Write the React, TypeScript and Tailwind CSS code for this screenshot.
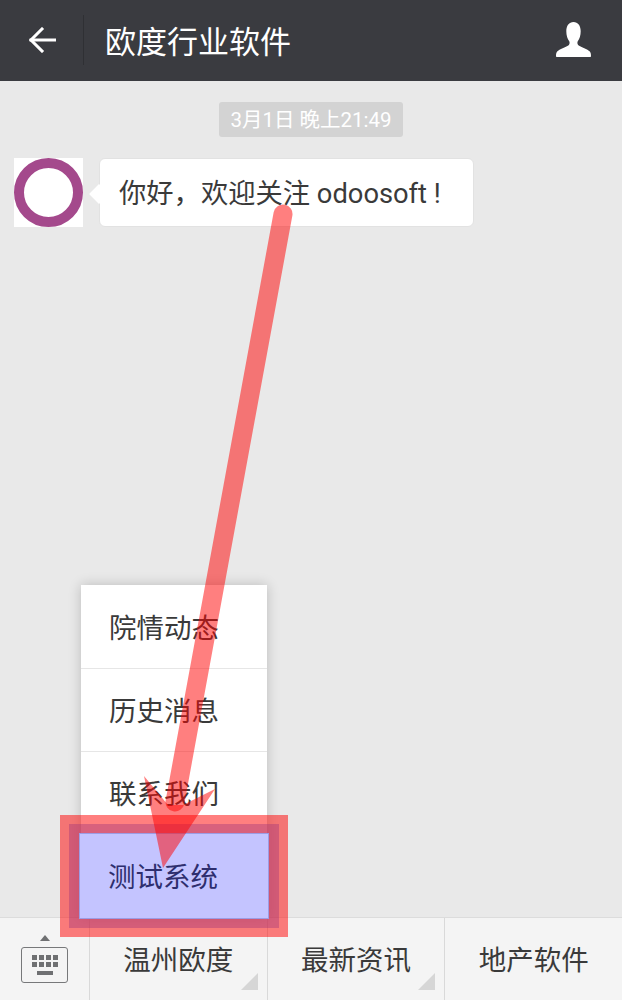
import React from "react";

const FONT = "font-['Roboto','Noto_Sans_CJK_SC',sans-serif]";

const MENU_ITEMS = ["院情动态", "历史消息", "联系我们"];

function BackIcon() {
  return (
    <svg width="28" height="26" viewBox="0 0 28 26" fill="none" stroke="white" strokeWidth="3" strokeLinecap="square" className="shrink-0">
      <path d="M3 13H26.5" />
      <path d="M14 2L3 13L14 24" />
    </svg>
  );
}

function PersonIcon() {
  return (
    <svg width="35" height="35" viewBox="0 0 36 32" preserveAspectRatio="none" fill="white">
      <path d="M18 0C13.5 0 10.6 3.3 10.6 8.5C10.6 12.5 11.8 15.6 13.6 17.6C14.2 18.3 14.2 20.4 13 21.2C10 23.2 3.6 24.6 1.2 27C0.2 28 0 29.6 0 31C0 31.6 0.4 32 1 32H35C35.6 32 36 31.6 36 31C36 29.6 35.8 28 34.8 27C32.4 24.6 26 23.2 23 21.2C21.8 20.4 21.8 18.3 22.4 17.6C24.2 15.6 25.4 12.5 25.4 8.5C25.4 3.3 22.5 0 18 0Z" />
    </svg>
  );
}

function KeyboardIcon() {
  return (
    <div className="flex flex-col items-center">
      <div className="w-0 h-0 border-x-[5px] border-x-transparent border-b-[6px] border-b-[#6f7072] mb-[6px]" />
      <div className="w-[47px] h-[36px] rounded-[3px] border border-[#77787a] flex flex-col items-center pt-[7px] gap-[2px]">
        <div className="grid grid-cols-4 gap-x-[2px] gap-y-[2px]">
          {Array.from({ length: 8 }).map((_, i) => (
            <div key={i} className="w-[5px] h-[5px] bg-[#6f7072]" />
          ))}
        </div>
        <div className="w-[16px] h-[4px] bg-[#6f7072] mt-[2px]" />
      </div>
    </div>
  );
}

function TabButton({ label, hasMenu }: { label: string; hasMenu?: boolean }) {
  return (
    <div className="relative flex-1 flex items-center justify-center border-l border-[#d9d9d9] text-[27.5px] text-[#3a3a3a] pt-[4px]">
      {label}
      {hasMenu && (
        <svg width="17" height="17" viewBox="0 0 17 17" className="absolute right-[9px] bottom-[10px]">
          <path d="M17 0V17H0Z" fill="#d6d6d6" />
        </svg>
      )}
    </div>
  );
}

export default function App() {
  return (
    <div className={`relative w-[622px] h-[1000px] flex flex-col overflow-hidden bg-[#e9e9e9] ${FONT}`}>
      {/* Title bar */}
      <header className="h-[81px] shrink-0 bg-[#3a3b40] flex items-center pb-[1px]">
        <div className="w-[84px] h-[50px] shrink-0 border-r border-[#2f3034] flex items-center pl-[28px]">
          <BackIcon />
        </div>
        <h1 className="ml-[21px] pt-[4px] text-[31px] text-white font-normal leading-none flex-1">欧度行业软件</h1>
        <div className="mr-[31px] mb-[2px]">
          <PersonIcon />
        </div>
      </header>

      {/* Chat */}
      <main className="relative flex-1 flex flex-col pt-[21px]">
        <div className="self-center h-[35px] w-[184px] pt-[1px] rounded-[3px] bg-[#d3d3d3] text-white text-[20.5px] flex items-center justify-center">
          3月1日 晚上21:49
        </div>
        <div className="flex items-start mt-[21px] pl-[14px]">
          <div className="w-[69px] h-[69px] shrink-0 bg-white flex items-center justify-center">
            <div className="w-[69px] h-[69px] rounded-full border-[10px] border-[#a4498c]" />
          </div>
          <div className="relative ml-[16px] w-[375px] h-[69px] pt-[3px] rounded-[6px] bg-white border border-[#e2e2e2] flex items-center pl-[19px] text-[27.3px] text-[#3a3a3a]">
            <div className="absolute left-[-8px] top-[28px] w-[14px] h-[14px] rotate-45 bg-white" />
            <span className="relative whitespace-pre">你好，欢迎关注 odoosoft !</span>
          </div>
        </div>

        {/* Popup menu */}
        <div className="absolute left-[81px] bottom-0 w-[186px] bg-white text-[27.5px] text-[#3a3a3a] shadow-[0_0_12px_rgba(0,0,0,0.2)]">
          {MENU_ITEMS.map((item) => (
            <div key={item} className="h-[83px] first:h-[84px] flex items-center pl-[28px] pt-[4px] border-b border-[#e6e6e6]">
              {item}
            </div>
          ))}
          <div className="h-[82px]" />
        </div>
      </main>

      {/* Bottom menu bar */}
      <footer className="h-[83px] shrink-0 bg-[#f4f4f4] border-t border-[#dcdcdc] flex text-center">
        <div className="w-[89px] shrink-0 flex items-center justify-center">
          <KeyboardIcon />
        </div>
        <TabButton label="温州欧度" hasMenu />
        <TabButton label="最新资讯" hasMenu />
        <TabButton label="地产软件" />
      </footer>

      {/* Annotation: highlight frame over the last menu row */}
      <div className="absolute left-[60px] top-[815px] w-[228px] h-[122px] border-[9px] border-[rgba(255,0,0,0.5)]">
        <div className="w-full h-full border-x-[10px] border-y-[9px] border-[rgba(200,30,70,0.7)]">
          <div className="w-full h-full bg-[#c4c4ff] border border-[#9c9ce4] flex items-center pl-[28px] pt-[4px] text-[27.5px] text-[#2e2e6e]">
            测试系统
          </div>
        </div>
      </div>

      {/* Annotation: arrow pointing at the menu row */}
      <svg width="622" height="1000" viewBox="0 0 622 1000" className="absolute left-0 top-0 pointer-events-none">
        <path d="M283 214L175 802" stroke="rgba(255,0,0,0.5)" strokeWidth="19" strokeLinecap="round" fill="none" />
        <path d="M144 776L168 805L183 805L215 789L163 868Z" fill="rgba(255,0,0,0.5)" />
      </svg>
    </div>
  );
}
